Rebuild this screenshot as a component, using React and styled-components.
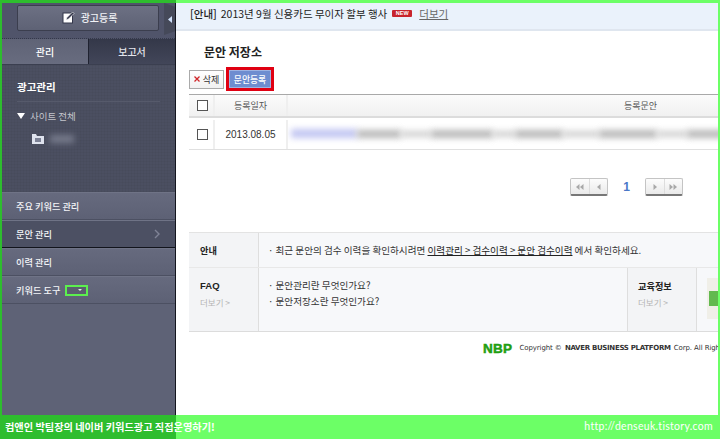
import React from 'react';
import styled, { createGlobalStyle } from 'styled-components';

const GlobalStyle = createGlobalStyle`
  html, body { margin: 0; padding: 0; background: #fff; }
  * { box-sizing: border-box; }
  body { font-family: "Noto Sans CJK KR", "Liberation Sans", sans-serif; overflow: hidden; }
`;

const frameGreen = 'linear-gradient(90deg, #2ebd2e 176px, #6cff66 176px)';

const Page = styled.div`
  width: 720px;
  height: 439px;
  display: flex;
  flex-direction: column;
  overflow: hidden;
`;

const TopEdge = styled.div`
  height: 3px;
  flex: none;
  background: ${frameGreen};
`;

const Body = styled.div`
  flex: 1;
  min-height: 0;
  display: flex;
  border-left: 2px solid #2ebd2e;
  border-right: 2px solid #6cff66;
`;

const Sidebar = styled.aside`
  width: 174px;
  flex: none;
  display: flex;
  flex-direction: column;
  border-right: 1px solid #14161f;
  background: #4d5163;
  color: #fff;
`;

const SideTop = styled.div`
  height: 36px;
  flex: none;
  display: flex;
  align-items: flex-start;
  padding: 2px 0 0 15px;
  background: #50546a;
  border-bottom: 1px dotted #34384a;
`;

const RegisterButton = styled.div`
  width: 143px;
  height: 26px;
  display: flex;
  align-items: center;
  justify-content: center;
  gap: 6px;
  padding: 0 0 1px 3px;
  font-size: 10px;
  font-weight: 500;
  color: #f2f3f6;
  background: linear-gradient(#6c7083, #5e6275);
  border: 1px solid #3b3e4e;
  border-radius: 2px;
`;

const CollapseTab = styled.div`
  width: 11px;
  height: 32px;
  margin: -2px 0 0 5px;
  display: flex;
  align-items: center;
  justify-content: center;
  background: #454959;
  clip-path: polygon(0 0, 100% 12%, 100% 88%, 0 100%);
`;

const Tabs = styled.div`
  height: 25px;
  flex: none;
  display: flex;
`;

const Tab = styled.div`
  display: flex;
  align-items: center;
  justify-content: center;
  font-size: 10px;
  font-weight: 500;
  width: ${p => (p.$active ? '86px' : '87px')};
  color: ${p => (p.$active ? '#fff' : '#e4e6ec')};
  background: ${p => (p.$active ? 'linear-gradient(#5f6376, #686c7f)' : 'linear-gradient(#343849, #424659)')};
  border-left: ${p => (p.$active ? 'none' : '1px solid #1f2230')};
`;

const Tree = styled.div`
  height: 128px;
  flex: none;
  padding: 13px 15px 0;
  border-top: 1px solid #3b3f50;
  background-color: #4b4f61;
  background-image:
    repeating-linear-gradient(0deg, rgba(0,0,0,.03) 0 1px, transparent 1px 3px),
    repeating-linear-gradient(90deg, rgba(0,0,0,.03) 0 1px, transparent 1px 3px);
`;

const TreeTitle = styled.div`
  height: 24px;
  font-size: 10.5px;
  font-weight: 700;
  line-height: 17px;
  border-bottom: 1px solid #565a6b;
`;

const SiteRow = styled.div`
  display: flex;
  align-items: center;
  gap: 5px;
  margin-top: 7px;
  font-size: 9.5px;
  color: #c4c5cc;
`;

const Caret = styled.span`
  width: 0;
  height: 0;
  border-left: 4px solid transparent;
  border-right: 4px solid transparent;
  border-top: 6px solid #fff;
`;

const FolderRow = styled.div`
  display: flex;
  align-items: center;
  gap: 6px;
  margin: 11px 0 0 15px;
`;

const BlurBlock = styled.div`
  flex: none;
  width: ${p => p.$w}px;
  height: ${p => p.$h || 8}px;
  background: ${p => p.$color || '#777b8c'};
  filter: blur(${p => p.$blur || 3}px);
`;

const Menu = styled.nav`
  flex: 1;
  background: #5e6276;
`;

const MenuItem = styled.div`
  height: 28px;
  display: flex;
  align-items: center;
  justify-content: space-between;
  padding: 0 15px 0 14px;
  font-size: 9.2px;
  font-weight: 500;
  color: #f4f5f8;
  background: ${p => (p.$current ? '#4c5063' : 'linear-gradient(#666a7e, #5d6175)')};
  border-top: 1px solid #6f7386;
  border-bottom: 1px solid ${p => (p.$current ? '#12141c' : '#4c5062')};
`;

const MenuLabel = styled.span`
  display: flex;
  align-items: center;
  gap: 5px;
`;

const ToolBadge = styled.span`
  width: 23px;
  height: 11px;
  display: flex;
  align-items: center;
  justify-content: flex-end;
  padding-right: 4px;
  background: #5b5f70;
  border: 2px solid #5cf04e;
`;

const TinyCaret = styled.span`
  width: 0;
  height: 0;
  border-left: 2px solid transparent;
  border-right: 2px solid transparent;
  border-top: 2px solid #e6e6e6;
`;

const Main = styled.main`
  flex: 1;
  min-width: 0;
  overflow: hidden;
  display: flex;
  flex-direction: column;
  color: #222;
`;

const Notice = styled.div`
  height: 28px;
  flex: none;
  display: flex;
  align-items: center;
  padding: 0 0 5px 14px;
  gap: 4px;
  font-size: 10.5px;
  background: #eaf2fb;
  border-bottom: 2px solid #dfe6ef;
  white-space: nowrap;
`;

const NoticeStrong = styled.b`
  font-weight: 500;
`;

const NewBadge = styled.span`
  width: 20px;
  height: 7px;
  margin-left: 1px;
  border-radius: 1px;
  background: #c8242c;
  color: #fff;
  font: 700 5.5px/7px "Liberation Sans", sans-serif;
  text-align: center;
`;

const MoreLink = styled.span`
  margin-left: 3px;
  color: #666;
  text-decoration: underline;
`;

const Content = styled.div`
  flex: 1;
  padding: 0 0 0 13px;
`;

const Title = styled.h2`
  margin: 11px 0 0 15px;
  height: 20px;
  font-size: 12px;
  line-height: 20px;
  font-weight: 700;
  color: #222;
`;

const Actions = styled.div`
  display: flex;
  align-items: center;
  gap: 2px;
  height: 24px;
  margin-top: 5px;
`;

const DeleteButton = styled.div`
  width: 35px;
  height: 19px;
  display: flex;
  align-items: center;
  justify-content: center;
  gap: 3px;
  font-size: 9px;
  color: #333;
  background: linear-gradient(#fff, #f1f1f1);
  border: 1px solid #aaa;
`;

const AddButton = styled.div`
  width: 48px;
  height: 24px;
  display: flex;
  align-items: center;
  justify-content: center;
  font-size: 8.8px;
  font-weight: 500;
  color: #fff;
  background: #6e8dd0;
  border: 3px solid #e00012;
  box-shadow: inset 0 0 0 1px #9db3e2;
`;

const Table = styled.div`
  width: 529px;
  margin-top: 3px;
  border-top: 1px solid #a9a9a9;
  border-bottom: 1px solid #e0e0e0;
`;

const TableRow = styled.div`
  display: flex;
  height: ${p => (p.$head ? '23px' : '31px')};
  padding-top: ${p => (p.$head ? '0' : '2px')};
  background: ${p => (p.$head ? 'linear-gradient(#fbfbfb, #f1f1f1)' : '#fff')};
  border-bottom: ${p => (p.$head ? '2px solid #dcdcdc' : 'none')};
`;

const Cell = styled.div`
  flex: ${p => (p.$fill ? 1 : 'none')};
  width: ${p => p.$w || 0}px;
  display: flex;
  align-items: center;
  justify-content: ${p => (p.$fill ? 'flex-start' : 'center')};
  padding-left: ${p => (p.$pad ? '3px' : '0')};
  font-size: ${p => (p.$date ? '10px' : '9px')};
  font-family: ${p => (p.$date ? '"Liberation Sans", sans-serif' : 'inherit')};
  font-weight: ${p => (p.$date ? 500 : 400)};
  color: ${p => (p.$date ? '#333' : '#555')};
  border-right: ${p => (p.$w ? '2px solid #efefef' : 'none')};
  overflow: hidden;
`;

const CheckCell = styled(Cell)`
  padding-left: 2px;
`;

const HeadCaption = styled.span`
  margin-left: 336px;
`;

const CheckBox = styled.span`
  width: 11px;
  height: 11px;
  background: #fff;
  border: 1px solid #555;
`;

const BlurRow = styled.div`
  display: flex;
  align-items: center;
  padding-bottom: 2px;
`;

const Pager = styled.div`
  display: flex;
  align-items: center;
  justify-content: flex-end;
  gap: 15px;
  width: 494px;
  margin-top: 28px;
  height: 18px;
`;

const PagerGroup = styled.div`
  display: flex;
  width: 38px;
  height: 18px;
  background: linear-gradient(#fcfcfc, #eaeaea);
  border: 1px solid #c4c4c4;
  border-bottom: 2px solid #777;
  border-radius: 2px;
`;

const PagerCell = styled.div`
  flex: 1;
  display: flex;
  align-items: center;
  justify-content: center;
  & + & { border-left: 1px solid #ddd; }
`;

const PageNumber = styled.span`
  font: 700 12px "Liberation Sans", sans-serif;
  color: #4a78c8;
`;

const InfoBox = styled.div`
  width: 529px;
  margin-top: 36px;
  background: #f7f8fa;
  border-top: 1px solid #e3e3e3;
  border-bottom: 1px solid #dcdcdc;
`;

const InfoRow = styled.div`
  display: flex;
  height: ${p => (p.$tall ? '63px' : '35px')};
  border-bottom: ${p => (p.$tall ? 'none' : '1px solid #e8e8e8')};
`;

const InfoHead = styled.div`
  flex: none;
  width: 70px;
  display: flex;
  flex-direction: column;
  justify-content: ${p => (p.$top ? 'flex-start' : 'center')};
  padding: ${p => (p.$top ? `10px 0 0 ${p.$edge ? 10 : 11}px` : '0 0 0 11px')};
  border-right: 1px solid #dedede;
  border-left: ${p => (p.$edge ? '1px solid #dedede' : 'none')};
  background: #f3f4f6;
`;

const InfoTitle = styled.span`
  font-size: 9.2px;
  font-weight: 700;
  line-height: 16px;
  color: #222;
`;

const FaqTitle = styled(InfoTitle)`
  font-family: "Liberation Sans", sans-serif;
  font-size: 9.5px;
`;

const More = styled.span`
  margin-top: 1px;
  font-size: 8.5px;
  line-height: 14px;
  color: #b5b5b5;
`;

const InfoBody = styled.div`
  flex: 1;
  min-width: 0;
  padding: ${p => (p.$top ? '9px 0 0 9px' : '0 0 0 9px')};
  display: flex;
  flex-direction: column;
  justify-content: ${p => (p.$top ? 'flex-start' : 'center')};
  font-size: 9.6px;
  line-height: 16px;
  color: #333;
  white-space: nowrap;
`;

const Underlined = styled.span`
  text-decoration: underline;
  color: #222;
`;

const Banner = styled.div`
  flex: none;
  width: 11px;
  height: 41px;
  margin: 10px 0 0 10px;
  display: flex;
  align-items: center;
  background: #f0efe8;
`;

const BannerMark = styled.span`
  width: 9px;
  height: 15px;
  margin-left: 2px;
  background: #62b94f;
`;

const Copyright = styled.footer`
  display: flex;
  align-items: center;
  gap: 7px;
  height: 18px;
  margin: 7px 0 0 294px;
  white-space: nowrap;
`;

const NbpLogo = styled.span`
  font: 900 13.5px "Liberation Sans", sans-serif;
  letter-spacing: .3px;
  color: #1f9e12;
  -webkit-text-stroke: .5px #1f9e12;
`;

const CopyText = styled.span`
  font: 7px "DejaVu Sans", sans-serif;
  color: #333;
  letter-spacing: -.1px;
`;

const CopyName = styled.span`
  font-weight: 700;
  letter-spacing: -.3px;
  margin: 0 1px;
`;

const BottomBand = styled.div`
  height: 24px;
  flex: none;
  display: flex;
  align-items: center;
  justify-content: space-between;
  padding: 0 7px 2px 5px;
  background: ${frameGreen};
  color: #fff;
`;

const BandTitle = styled.span`
  font-size: 10.2px;
  font-weight: 700;
`;

const BandLink = styled.span`
  font: 10.5px Lato, sans-serif;
  letter-spacing: .3px;
`;

const PencilIcon = () => (
  <svg width="13" height="13" viewBox="0 0 13 13">
    <rect x="1" y="2" width="9.5" height="10" fill="#fff" stroke="#33364a" />
    <path d="M4 9l1-2.5L10.5 1 12 2.5 6.5 8z" fill="#33364a" stroke="#fff" strokeWidth=".6" />
  </svg>
);

const ArrowLeft = () => (
  <svg width="4" height="7" viewBox="0 0 4 7"><path d="M4 0v7L0 3.5z" fill="#cfe0fa" /></svg>
);

const FolderIcon = () => (
  <svg width="12" height="10" viewBox="0 0 12 10">
    <path d="M0 0h4l1 2h7v8H0z" fill="#dfe3ee" />
    <rect x="3" y="4" width="6" height="4" fill="#7d8296" />
  </svg>
);

const Chevron = () => (
  <svg width="6" height="10" viewBox="0 0 6 10"><path d="M1 1l4 4-4 4" fill="none" stroke="#7f8396" strokeWidth="1.4" /></svg>
);

const CloseMark = () => (
  <svg width="6" height="6" viewBox="0 0 6 6"><path d="M.5.5l5 5M5.5.5l-5 5" stroke="#d0262a" strokeWidth="1.3" /></svg>
);

// count = single or double arrow, flip = points right
const PagerArrow = ({ count = 1, flip }) => (
  <svg width={count === 2 ? 8 : 4} height="6" viewBox={count === 2 ? '0 0 8 6' : '0 0 4 6'}>
    <g transform={flip ? `translate(${count === 2 ? 8 : 4}) scale(-1 1)` : undefined} fill="#a8a8a8">
      <path d="M3.5 0v6L0 3z" />
      {count === 2 && <path d="M7.5 0v6L4 3z" />}
    </g>
  </svg>
);

const blurWidths = [44, 30, 62, 22, 48, 36, 58, 30, 40];

const App = () => (
  <>
    <GlobalStyle />
    <Page>
      <TopEdge />
      <Body>
        <Sidebar>
          <SideTop>
            <RegisterButton><PencilIcon />광고등록</RegisterButton>
            <CollapseTab><ArrowLeft /></CollapseTab>
          </SideTop>
          <Tabs>
            <Tab $active>관리</Tab>
            <Tab>보고서</Tab>
          </Tabs>
          <Tree>
            <TreeTitle>광고관리</TreeTitle>
            <SiteRow><Caret />사이트 전체</SiteRow>
            <FolderRow><FolderIcon /><BlurBlock $w={24} $h={8} /></FolderRow>
          </Tree>
          <Menu>
            <MenuItem>주요 키워드 관리</MenuItem>
            <MenuItem $current>문안 관리<Chevron /></MenuItem>
            <MenuItem>이력 관리</MenuItem>
            <MenuItem>
              <MenuLabel>키워드 도구<ToolBadge><TinyCaret /></ToolBadge></MenuLabel>
            </MenuItem>
          </Menu>
        </Sidebar>
        <Main>
          <Notice>
            <NoticeStrong>[안내]</NoticeStrong> 2013년 9월 신용카드 무이자 할부 행사
            <NewBadge>NEW</NewBadge>
            <MoreLink>더보기</MoreLink>
          </Notice>
          <Content>
            <Title>문안 저장소</Title>
            <Actions>
              <DeleteButton><CloseMark />삭제</DeleteButton>
              <AddButton>문안등록</AddButton>
            </Actions>
            <Table>
              <TableRow $head>
                <CheckCell $w={26}><CheckBox /></CheckCell>
                <Cell $w={73}>등록일자</Cell>
                <Cell $fill><HeadCaption>등록문안</HeadCaption></Cell>
              </TableRow>
              <TableRow>
                <CheckCell $w={26}><CheckBox /></CheckCell>
                <Cell $w={73} $date>2013.08.05</Cell>
                <Cell $fill $pad>
                  <BlurRow>
                    <BlurBlock $w={66} $h={9} $color="#c2c6f2" />
                    {blurWidths.map((w, i) => (
                      <BlurBlock key={i} $w={w} $h={i % 2 ? 6 : 8} $blur={3} $color={i % 2 ? '#cfcfcf' : '#b8b8b8'} />
                    ))}
                  </BlurRow>
                </Cell>
              </TableRow>
            </Table>
            <Pager>
              <PagerGroup>
                <PagerCell><PagerArrow count={2} /></PagerCell>
                <PagerCell><PagerArrow /></PagerCell>
              </PagerGroup>
              <PageNumber>1</PageNumber>
              <PagerGroup>
                <PagerCell><PagerArrow flip /></PagerCell>
                <PagerCell><PagerArrow count={2} flip /></PagerCell>
              </PagerGroup>
            </Pager>
            <InfoBox>
              <InfoRow>
                <InfoHead><InfoTitle>안내</InfoTitle></InfoHead>
                <InfoBody>
                  <span>· 최근 문안의 검수 이력을 확인하시려면 <Underlined>이력관리 &gt; 검수이력 &gt; 문안 검수이력</Underlined> 에서 확인하세요.</span>
                </InfoBody>
              </InfoRow>
              <InfoRow $tall>
                <InfoHead $top><FaqTitle>FAQ</FaqTitle><More>더보기 &gt;</More></InfoHead>
                <InfoBody $top>
                  <span>· 문안관리란 무엇인가요?</span>
                  <span>· 문안저장소란 무엇인가요?</span>
                </InfoBody>
                <InfoHead $top $edge><InfoTitle>교육정보</InfoTitle><More>더보기 &gt;</More></InfoHead>
                <Banner><BannerMark /></Banner>
              </InfoRow>
            </InfoBox>
            <Copyright>
              <NbpLogo>NBP</NbpLogo>
              <CopyText>Copyright © <CopyName>NAVER BUSINESS PLATFORM</CopyName> Corp. All Rights Reserved.</CopyText>
            </Copyright>
          </Content>
        </Main>
      </Body>
      <BottomBand>
        <BandTitle>컴앤인 박팀장의 네이버 키워드광고 직접운영하기!</BandTitle>
        <BandLink>http://denseuk.tistory.com</BandLink>
      </BottomBand>
    </Page>
  </>
);

export default App;
